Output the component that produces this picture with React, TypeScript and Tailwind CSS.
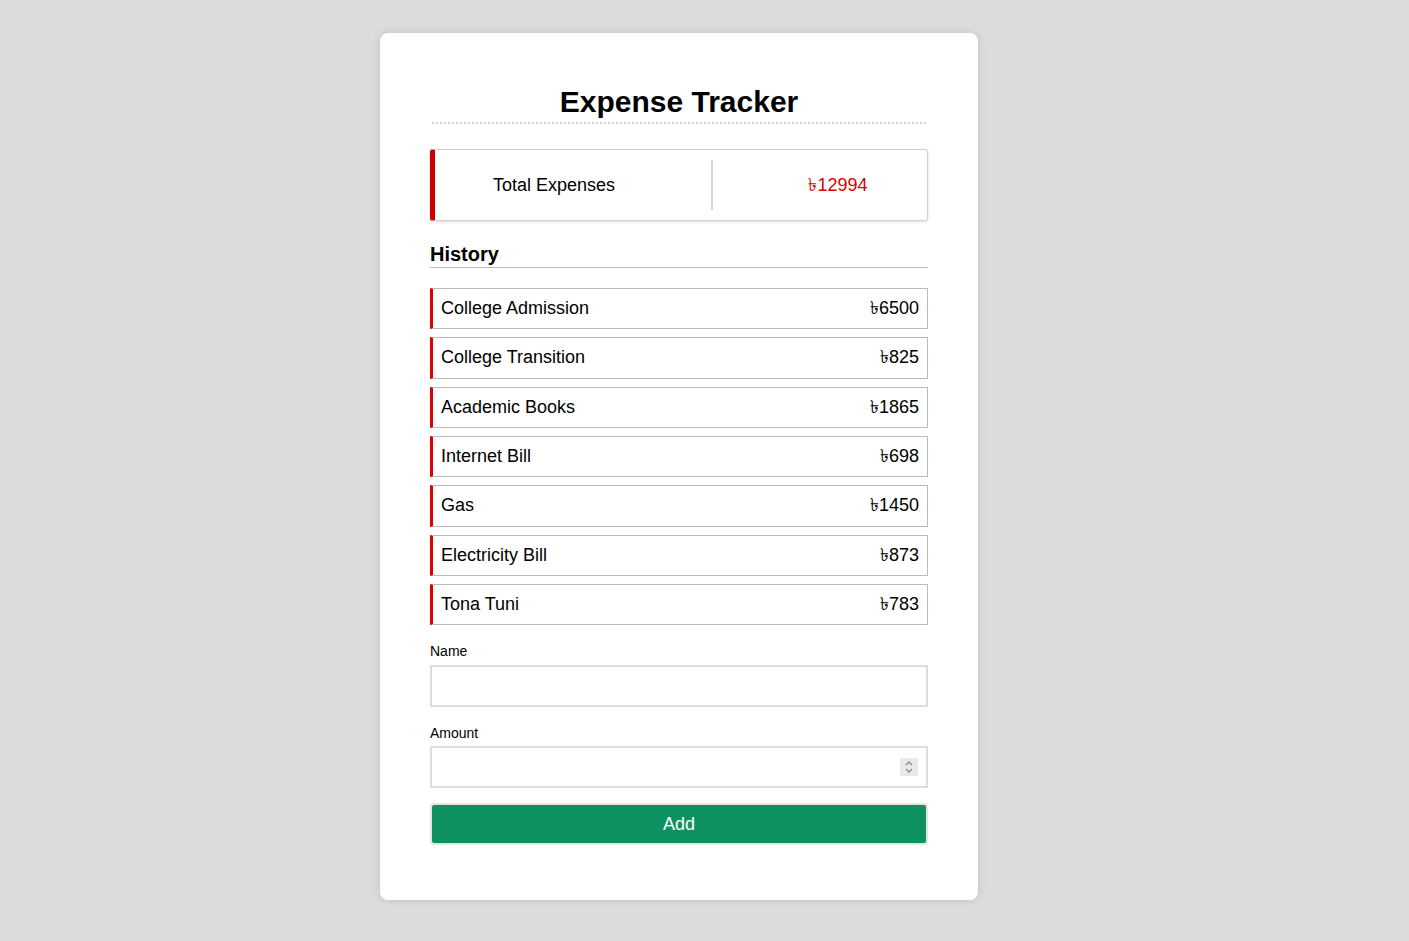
import { useState } from 'react';

type Expense = { id: number; name: string; amount: number };

const initial: Expense[] = [
    { id: 1, name: 'College Admission', amount: 6500 },
    { id: 2, name: 'College Transition', amount: 825 },
    { id: 3, name: 'Academic Books', amount: 1865 },
    { id: 4, name: 'Internet Bill', amount: 698 },
    { id: 5, name: 'Gas', amount: 1450 },
    { id: 6, name: 'Electricity Bill', amount: 873 },
    { id: 7, name: 'Tona Tuni', amount: 783 },
];

export default function App() {
    const [items, setItems] = useState<Expense[]>(initial);
    const [name, setName] = useState('');
    const [amount, setAmount] = useState('');

    const total = items.reduce((s, i) => s + i.amount, 0);

    const handleAdd = () => {
        if (!name || !amount) return;
        setItems([...items, { id: Date.now(), name, amount: Number(amount) }]);
        setName('');
        setAmount('');
    };

    return (
        <div className="min-h-screen bg-[#dcdcdc] pt-[33px] pb-10 font-['Liberation_Sans','Noto_Sans',sans-serif] text-black">
            <div className="ml-[380px] w-[598px] bg-white rounded-lg shadow-[0_0_8px_rgba(0,0,0,0.12)] px-[50px] pt-[52px] pb-[55px]">
                <h1 className="text-[30px] font-bold text-center leading-[34px] pb-[3px] mx-[2px] border-b-2 border-dotted border-[#cfcfcf]">
                    Expense Tracker
                </h1>

                {/* Total */}
                <div className="mt-[25px] flex items-center h-[72px] border border-[#cfcfcf] border-l-[5px] border-l-[#cc0000] rounded-[3px] shadow-[0_1px_3px_rgba(0,0,0,0.15)]">
                    <div className="w-[276px] pr-[38px] text-center text-[18px]">Total Expenses</div>
                    <div className="w-[2px] h-[50px] bg-[#d6d6d6]"></div>
                    <div className="flex-1 pl-[36px] text-center text-[18px] text-[#dd0000]">৳{total}</div>
                </div>

                <h3 className="mt-[21px] text-[20px] font-bold leading-[24px] pb-[1px] border-b border-[#bbbbbb]">History</h3>

                <ul className="mt-[20px] flex flex-col gap-[8px]">
                    {items.map(item => (
                        <li
                            key={item.id}
                            className="flex items-center justify-between h-[41.33px] px-[8px] border border-[#bbbbbb] border-l-[3px] border-l-[#dd0000] text-[18px]"
                        >
                            <span>{item.name}</span>
                            <span>৳{item.amount}</span>
                        </li>
                    ))}
                </ul>

                <div className="mt-[17px]">
                    <label className="block text-[14px] leading-[18px] mb-[5px]">Name</label>
                    <input
                        value={name}
                        onChange={e => setName(e.target.value)}
                        className="block w-full h-[42px] border-2 border-[#dddddd] px-2 text-[16px] outline-none"
                    />
                </div>
                <div className="mt-[17px]">
                    <label className="block text-[14px] leading-[18px] mb-[4px]">Amount</label>
                    <div className="relative">
                        <input
                            type="number"
                            value={amount}
                            onChange={e => setAmount(e.target.value)}
                            className="block w-full h-[42px] border-2 border-[#dddddd] px-2 pr-8 text-[16px] outline-none [appearance:textfield] [&::-webkit-inner-spin-button]:appearance-none [&::-webkit-outer-spin-button]:appearance-none"
                        />
                        {/* spinner */}
                        <div className="absolute right-[10px] top-[12px] w-[18px] h-[18px] bg-[#e9e9ed] flex flex-col items-center justify-center pointer-events-none">
                            <svg width="10" height="14" viewBox="0 0 10 14" fill="none" stroke="#8a8a8f" strokeWidth="1.3">
                                <path d="M2 5 L5 2 L8 5" />
                                <path d="M2 9 L5 12 L8 9" />
                            </svg>
                        </div>
                    </div>
                </div>
                <button
                    onClick={handleAdd}
                    className="mt-[15px] block w-full h-[42px] bg-[#0e9160] text-white text-[18px] rounded-[4px] border-2 border-[#e4e4e4]"
                >
                    Add
                </button>
            </div>
        </div>
    );
}
